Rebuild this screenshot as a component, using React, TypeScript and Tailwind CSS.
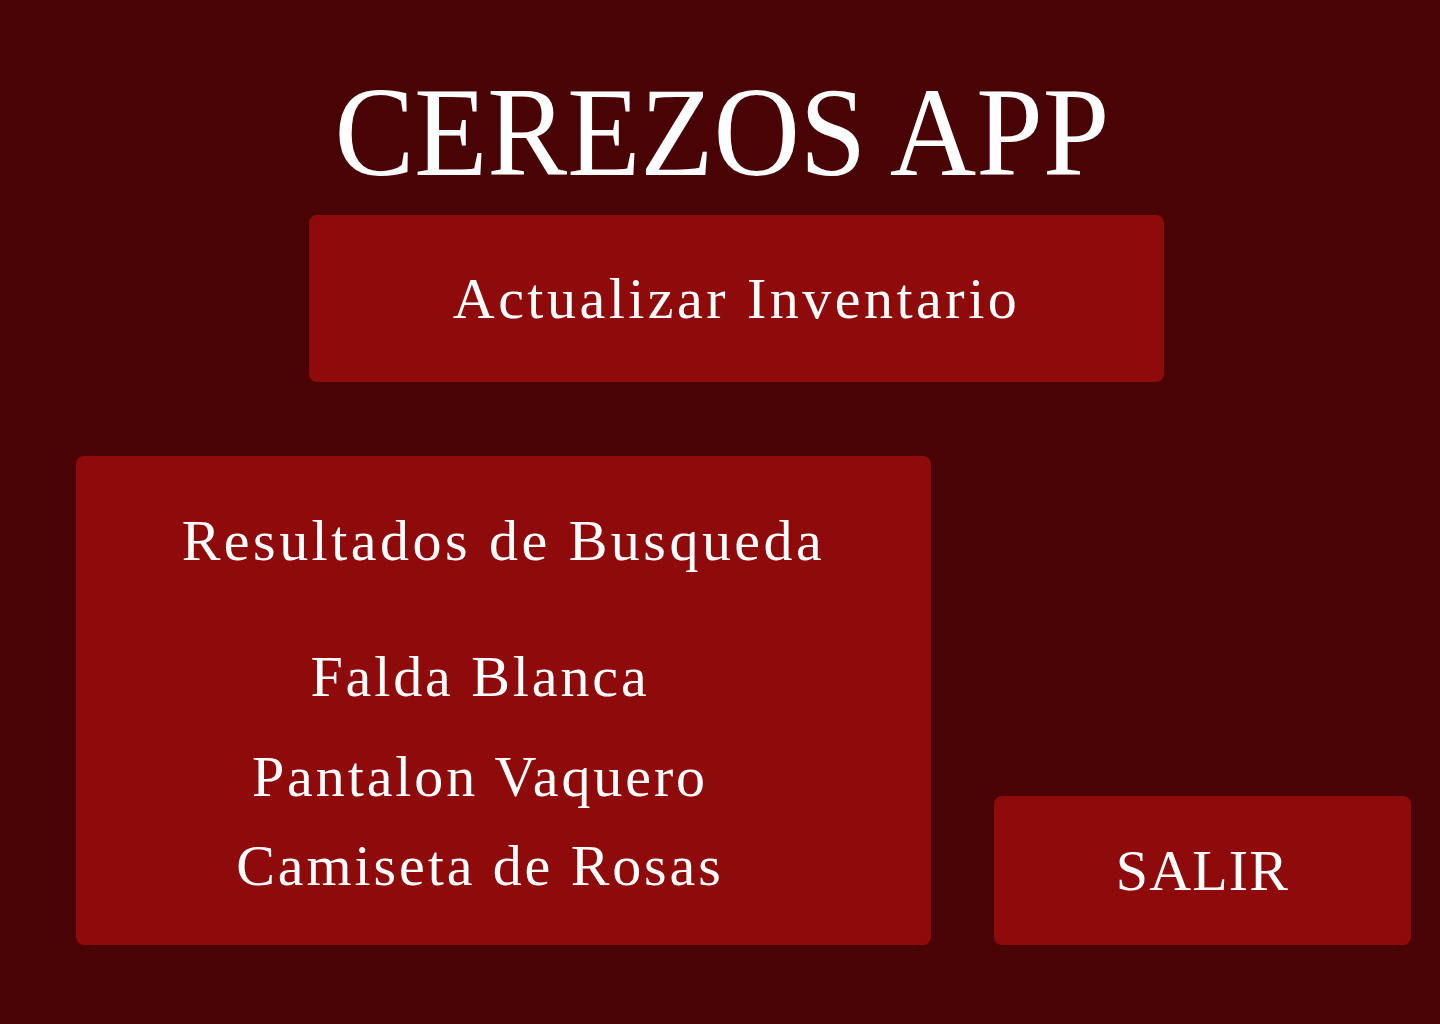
const items = [
    { name: "Falda Blanca", mt: "mt-[78px]" },
    { name: "Pantalon Vaquero", mt: "mt-[42px]" },
    { name: "Camiseta de Rosas", mt: "mt-[31px]" },
]

const App = () => {
    return (
        <div className="w-[1440px] h-[1024px] bg-[#4a0305] text-white font-['Liberation_Serif',serif] flex flex-col">

            <h1 className="mt-[70px] text-center text-[126px] leading-none font-normal pl-[4px]">
                <span className="inline-block scale-x-[0.95]">CEREZOS APP</span>
            </h1>

            <div className="pl-[309px] mt-[19px]">
                <button className="w-[855px] h-[167px] rounded-lg bg-[#8e0a0b] flex items-center justify-center text-[58px] leading-none tracking-[0.06em]">
                    Actualizar Inventario
                </button>
            </div>

            <div className="flex items-end pl-[76px] mt-[74px] gap-[63px]">
                <div className="w-[855px] h-[489px] rounded-lg bg-[#8e0a0b] flex flex-col items-center pt-[56px]">
                    <h2 className="text-[58px] leading-none tracking-[0.06em]">Resultados de Busqueda</h2>
                    <ul className="flex flex-col items-center pr-[47px]">
                        {items.map((item) => (
                            <li key={item.name} className={`${item.mt} text-[58px] leading-none tracking-[0.05em]`}>
                                {item.name}
                            </li>
                        ))}
                    </ul>
                </div>

                <button className="w-[417px] h-[149px] rounded-lg bg-[#8e0a0b] flex items-center justify-center text-[58px] leading-none tracking-[0.02em]">
                    SALIR
                </button>
            </div>

        </div>
    )
}

export default App
